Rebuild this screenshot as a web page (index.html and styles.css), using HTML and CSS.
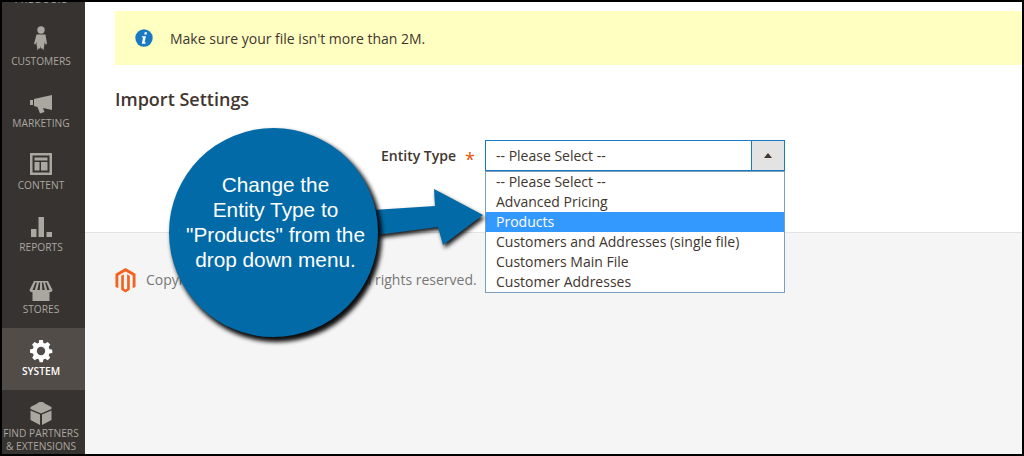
FILE: index.html
```html
<!DOCTYPE html>
<html lang="en">
<head>
<meta charset="utf-8">
<title>Import Settings</title>
<link rel="stylesheet" href="styles.css">
</head>
<body>
<div class="frame">
  <nav class="sidebar">
    <ul class="menu">
      <li class="item"><span class="icon"></span><span class="label">Products</span></li>
      <li class="item">
        <svg class="icon" viewBox="0 0 24 28"><circle cx="12" cy="4" r="3.700"/><path d="M7.500 8.500h9l1.500 9.500-1.500.5-.8-2.500-1.200 8.500-1.500-2.500-1 1-.5-3-.5 3-1-1-1.500 2.500-1.200-8.500-.8 2.500-1.500-.5z"/></svg>
        <span class="label">Customers</span>
      </li>
      <li class="item">
        <svg class="icon" viewBox="0 0 24 24"><path d="M1 10h3v5H1zM5 9 23 5v15L14 18l1.500 4-4.500 1.500L8.500 17 5 16z"/></svg>
        <span class="label">Marketing</span>
      </li>
      <li class="item">
        <svg class="icon" viewBox="0 0 24 24"><path fill-rule="evenodd" d="M1 1h22v22H1zM3.500 3.500v17h17v-17zM5.500 5.500h13v3h-13zM5.500 10h5v8.500h-5zM12 10h6.500v8.500H12z"/></svg>
        <span class="label">Content</span>
      </li>
      <li class="item">
        <svg class="icon" viewBox="0 0 24 24"><path d="M2 15h5.500v8H2zM9.500 3H15v20H9.500zM17.500 18H23v5h-5.500z"/></svg>
        <span class="label">Reports</span>
      </li>
      <li class="item">
        <svg class="icon" viewBox="0 0 24 24"><path fill-rule="evenodd" d="M5 5h14l4.500 9c0 1.500-1.500 2.200-3 2.200V25h-17v-8.800C2 16.200.5 15.500.5 14zM6.500 6.500 3.500 14h2.300l2.200-7.500zM10 6.500 8.300 14h2.500l.4-7.500zM13 6.500l.3 7.500h2.500l-1.500-7.500zM16 6.500l2.200 7.500h2.400l-3.100-7.500z"/></svg>
        <span class="label">Stores</span>
      </li>
      <li class="item active">
        <svg class="icon" viewBox="0 0 24 24"><path fill-rule="evenodd" d="M10.200 2h3.600l.6 2.900 1.800.7 2.500-1.500 2.500 2.500-1.500 2.500.7 1.800 2.900.8v3.200l-2.900.6-.7 1.800 1.500 2.400-2.500 2.500-2.500-1.500-1.800.7-.6 2.900h-3.200l-.6-2.900-1.800-.7-2.500 1.500-2.500-2.500 1.500-2.400-.7-1.800L1 14.700v-3.200l2.900-.8.700-1.800-1.500-2.500 2.500-2.500 2.500 1.500 1.800-.7zM12 8.800a4.200 4.200 0 1 0 0 8.400 4.200 4.200 0 0 0 0-8.400z"/></svg>
        <span class="label">System</span>
      </li>
      <li class="item">
        <svg class="icon" viewBox="0 0 24 24"><path d="M12 2c2 0 3.500.7 3.700 1.500L22.500 7v2L12 13.500 1.500 9V7l6.800-3.500C8.500 2.700 10 2 12 2z"/><path d="M1.500 10.500 11 14.500V25L1.500 20z"/><path d="M22.500 10.500 13 14.500V25l9.500-5z"/></svg>
        <span class="label">Find Partners<br>&amp; Extensions</span>
      </li>
    </ul>
  </nav>
  <main class="main">
    <section class="content">
      <div class="notice">
        <svg class="info" viewBox="0 0 18 18"><circle cx="9" cy="9" r="8.700" fill="#1979c3"/><path fill="#fff" d="M9.700 3.200h2.300l-.4 2.200H9.300zM7 7.200h3.900l-1.300 6.200h1.200l-.3 1.300H6.800l1.300-6.200H6.800z"/></svg>
        <span>Make sure your file isn't more than 2M.</span>
      </div>
      <h2 class="heading">Import Settings</h2>
      <div class="field">
        <span class="field-label">Entity Type</span>
        <span class="required">*</span>
        <div class="select-wrap">
          <div class="select">
            <span class="select-value">-- Please Select --</span>
            <span class="select-toggle"><i class="caret"></i></span>
          </div>
          <ul class="options">
            <li>-- Please Select --</li>
            <li>Advanced Pricing</li>
            <li class="selected">Products</li>
            <li>Customers and Addresses (single file)</li>
            <li>Customers Main File</li>
            <li>Customer Addresses</li>
          </ul>
        </div>
      </div>
    </section>
    <footer class="footer">
      <svg class="logo" viewBox="0 0 22 26"><path fill="#f26322" d="M11 0 21.500 6v13.500l-3 1.700V7.800L11 3.500 3.500 7.800v13.400l-3-1.700V6z"/><path fill="#f26322" d="M11 5.500 15.500 8v14.700L11 25.500l-4.500-2.800V8l2.800-1.600v15l1.700 1 1.700-1v-15z"/></svg>
      <span>Copyright © 2018 Magento, Inc. All rights reserved.</span>
    </footer>
  </main>
  <div class="callout">
    <svg class="arrow" viewBox="0 0 120 70"><path d="M7 32 69 28 68 11 117 37 77 67 72 49 11 57z"/></svg>
    <div class="bubble">Change the<br>Entity Type to<br>"Products" from the<br>drop down menu.</div>
  </div>
</div>
</body>
</html>
```
FILE: styles.css
```css
* { box-sizing: border-box; }
html, body { margin: 0; height: 100%; }
body { background: #000; font-family: "Open Sans", sans-serif; overflow: hidden; }
ul { list-style: none; margin: 0; padding: 0; }

.frame {
  position: relative;
  display: flex;
  width: 1024px;
  height: 456px;
  border: 2px solid #000;
  overflow: hidden;
  background: #fff;
}

.sidebar { width: 83px; flex: none; background: #373330; overflow: hidden; }
.menu { margin-top: -46px; }
.item {
  height: 62px;
  display: flex;
  flex-direction: column;
  align-items: center;
  padding: 8px 5px 0 0;
  color: #aaa6a0;
  font-size: 10.200px;
  line-height: 13px;
  text-transform: uppercase;
  text-align: center;
}
.item .icon { display: block; width: 24px; height: 28px; fill: #aaa6a0; flex: none; }
.item .label { display: block; margin-top: 1px; white-space: nowrap; }
.item.active { background: #514c47; color: #fff; font-weight: 600; }
.item.active .icon { fill: #fff; }

.main { flex: 1; display: flex; flex-direction: column; min-width: 0; }
.content { height: 231px; padding: 9px 0 0 30px; border-bottom: 1px solid #e3e3e3; }

.notice {
  display: flex;
  align-items: center;
  height: 54px;
  padding-left: 20px;
  background: #ffffc1;
  color: #41362f;
  font-size: 14px;
}
.info { width: 18px; height: 18px; margin-right: 17px; flex: none; }

.heading {
  margin: 24px 0 0;
  color: #41362f;
  font-size: 18px;
  font-weight: 600;
  line-height: 20px;
}

.field { display: flex; align-items: flex-start; margin-top: 31px; padding-left: 266px; }
.field-label { color: #41362f; font-size: 14px; font-weight: 600; line-height: 32px; }
.required { width: 29px; padding-left: 9px; color: #eb5202; font-size: 18px; line-height: 38px; }

.select-wrap { position: relative; width: 300px; flex: none; }
.select {
  display: flex;
  height: 31px;
  border: 1px solid #1979c3;
  background: #fff;
  color: #41362f;
  font-size: 14px;
  line-height: 29px;
}
.select-value { flex: 1; padding-left: 10px; }
.select-toggle {
  display: flex;
  align-items: center;
  justify-content: center;
  width: 33px;
  background: #e3e3e3;
  border-left: 1px solid #1979c3;
}
.caret { border: 4px solid transparent; border-top: 0; border-bottom: 5px solid #41362f; }

.options {
  position: absolute;
  top: 31px;
  left: 0;
  width: 300px;
  height: 122px;
  border: 1px solid #7f9db9;
  background: #fff;
  color: #41362f;
  font-size: 14px;
  line-height: 20px;
}
.options li { height: 20px; padding-left: 10px; }
.options .selected { background: #3399ff; color: #fff; }

.footer {
  flex: 1;
  display: flex;
  align-items: flex-start;
  padding: 35px 0 0 30px;
  background: #f5f5f5;
  color: #777;
  font-size: 14px;
  line-height: 24px;
}
.logo { width: 21px; height: 25px; margin-right: 10px; flex: none; }

.callout { position: absolute; left: 165px; top: 124px; width: 330px; height: 220px; }
.bubble {
  position: absolute;
  left: 2px;
  top: 2px;
  width: 209px;
  height: 209px;
  border-radius: 50%;
  background: #026aa7;
  box-shadow: 3px 4px 4px 1px rgba(0,0,0,.95);
  color: #fff;
  font-family: "Liberation Sans", Arial, sans-serif;
  font-size: 20.800px;
  line-height: 25px;
  text-align: center;
  padding: 44px 0 0 4px;
}
.arrow {
  position: absolute;
  left: 199px;
  top: 52px;
  width: 120px;
  height: 70px;
  fill: #026aa7;
  filter: drop-shadow(2px 3px 2px rgba(0,0,0,.9));
}
```
